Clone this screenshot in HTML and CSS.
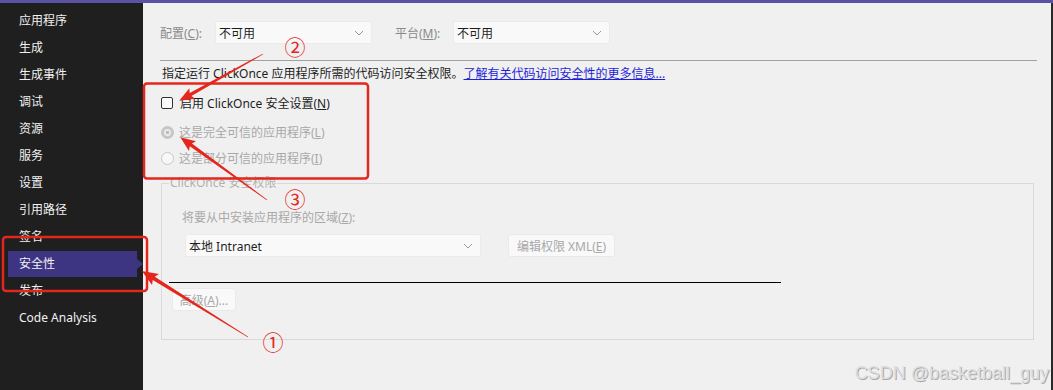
FILE: index.html
```html
<!DOCTYPE html>
<html lang="zh-CN">
<head>
    <meta charset="UTF-8">
    <meta name="viewport" content="width=device-width, initial-scale=1.0">
    <title>安全性 - 项目属性</title>
    <link rel="stylesheet" href="styles.css">
</head>

<body>
    <div class="window">
        <div class="title-strip"></div>
        <div class="main">
            <nav class="sidebar">
                <div class="nav-item">应用程序</div>
                <div class="nav-item">生成</div>
                <div class="nav-item">生成事件</div>
                <div class="nav-item">调试</div>
                <div class="nav-item">资源</div>
                <div class="nav-item">服务</div>
                <div class="nav-item">设置</div>
                <div class="nav-item">引用路径</div>
                <div class="nav-item">签名</div>
                <div class="nav-item active">安全性</div>
                <div class="nav-item">发布</div>
                <div class="nav-item">Code Analysis</div>
            </nav>

            <section class="content">
                <div class="config-row">
                    <span class="field-label">配置(<u>C</u>):</span>
                    <div class="select select-sm">
                        <span>不可用</span>
                        <svg class="chevron" viewBox="0 0 10 6"><polyline points="1,1 5,5 9,1"/></svg>
                    </div>
                    <span class="field-label platform">平台(<u>M</u>):</span>
                    <div class="select select-sm">
                        <span>不可用</span>
                        <svg class="chevron" viewBox="0 0 10 6"><polyline points="1,1 5,5 9,1"/></svg>
                    </div>
                </div>

                <div class="rule"></div>

                <p class="desc">指定运行 ClickOnce 应用程序所需的代码访问安全权限。<a href="#">了解有关代码访问安全性的更多信息...</a></p>

                <div class="option enable">
                    <span class="checkbox"></span>
                    <span>启用 ClickOnce 安全设置(<u>N</u>)</span>
                </div>
                <div class="option disabled first-radio">
                    <span class="radio checked"></span>
                    <span>这是完全可信的应用程序(<u>L</u>)</span>
                </div>
                <div class="option disabled second-radio">
                    <span class="radio"></span>
                    <span>这是部分可信的应用程序(<u>I</u>)</span>
                </div>

                <fieldset class="group">
                    <legend>ClickOnce 安全权限</legend>
                    <div class="group-body">
                        <div class="zone-label">将要从中安装应用程序的区域(<u>Z</u>):</div>
                        <div class="zone-row">
                            <div class="select select-lg">
                                <span>本地 Intranet</span>
                                <svg class="chevron" viewBox="0 0 10 6"><polyline points="1,1 5,5 9,1"/></svg>
                            </div>
                            <button class="btn edit-btn">编辑权限 XML(<u>E</u>)</button>
                        </div>
                        <div class="black-rule"></div>
                        <button class="btn adv-btn">高级(<u>A</u>)...</button>
                    </div>
                </fieldset>
            </section>
            <div class="edge"></div>
        </div>

        <!-- red annotations drawn over the screenshot -->
        <svg class="marks" viewBox="0 0 1053 390">
            <rect x="144" y="83.5" width="224" height="95" rx="3"/>
            <rect x="3" y="237" width="144" height="54" rx="3"/>

            <polygon class="arrow" transform="translate(263 54) rotate(150.8)"
                points="0,-0.4 83,-1.8 81,-6 96,0 81,6 83,1.8 0,0.4"/>
            <polygon class="arrow" transform="translate(267 200) rotate(-144.1)"
                points="0,-0.4 94,-1.8 92,-6 107,0 92,6 94,1.8 0,0.4"/>
            <polygon class="arrow" transform="translate(248 337) rotate(-148.1)"
                points="0,-0.4 111,-1.9 109,-6.5 125,0 109,6.5 111,1.9 0,0.4"/>

            <text x="295" y="55">②</text>
            <text x="295" y="207">③</text>
            <text x="273" y="350">①</text>
        </svg>

        <div class="watermark">CSDN @basketball_guy</div>
    </div>
</body>
</html>
```

FILE: styles.css
```css
/* Reset */
* {
    margin: 0;
    padding: 0;
    box-sizing: border-box;
}

body {
    font-family: "Noto Sans", "Noto Sans CJK SC", sans-serif;
    font-size: 12px;
    background-color: #f0f0f0;
    color: #1e1e1e;
}

u {
    text-decoration: underline;
    text-underline-offset: 1px;
}

.window {
    position: relative;
    width: 1053px;
    height: 390px;
    overflow: hidden;
    background-color: #f0f0f0;
}

.title-strip {
    height: 3px;
    background-color: #5a52a2;
}

.main {
    display: flex;
    height: 387px;
}

/* Sidebar */
.sidebar {
    width: 143px;
    flex-shrink: 0;
    background-color: #1f1f1f;
    padding-top: 4px;
}

.nav-item {
    height: 27px;
    line-height: 27px;
    padding-left: 19px;
    color: #f1f1f1;
    white-space: nowrap;
}

.nav-item.active {
    position: relative;
    height: 26px;
    line-height: 26px;
    margin: 1px 6px 0 8px;
    padding-left: 11px;
    background-color: #3e3582;
}

.nav-item.active::after {
    content: "";
    position: absolute;
    right: -6px;
    top: 8px;
    border-top: 5px solid transparent;
    border-bottom: 5px solid transparent;
    border-left: 6px solid #3e3582;
}

/* Content */
.content {
    flex: 1;
    padding: 18px 14px 0 17px;
}

.edge {
    width: 2px;
    background-color: #2a2a2a;
}

.config-row {
    display: flex;
    align-items: center;
    height: 23px;
}

.field-label {
    width: 55px;
    color: #8a8a8a;
}

.field-label.platform {
    width: 58px;
    margin-left: 23px;
}

.select {
    display: flex;
    align-items: center;
    justify-content: space-between;
    height: 23px;
    padding: 0 7px 0 3px;
    background-color: #f9f9f9;
    border: 1px solid #ebebeb;
    border-radius: 2px;
    color: #1e1e1e;
}

.select-sm {
    width: 157px;
}

.select-lg {
    width: 296px;
}

.chevron {
    width: 10px;
    height: 6px;
    fill: none;
    stroke: #9a9a9a;
    stroke-width: 1;
}

.rule {
    height: 1px;
    margin-top: 16px;
    background-color: #a0a0a0;
}

.desc {
    margin-top: 5px;
    padding-left: 2px;
    line-height: 16px;
    white-space: nowrap;
}

.desc a {
    color: #1f1fd6;
    text-decoration: underline;
}

/* Check + radio rows */
.option {
    display: flex;
    align-items: center;
    height: 18px;
    margin-left: 1px;
    white-space: nowrap;
}

.option.enable {
    margin-top: 12px;
    gap: 7px;
}

.option.disabled {
    color: #a8a8a8;
    gap: 5px;
}

.option.first-radio {
    margin-top: 11px;
}

.option.second-radio {
    margin-top: 8px;
}

.checkbox {
    width: 12px;
    height: 12px;
    border: 1px solid #333;
    border-radius: 2px;
    background-color: #fbfbfb;
}

.radio {
    width: 13px;
    height: 13px;
    border: 1px solid #c9c9c9;
    border-radius: 50%;
    background-color: #f7f7f7;
}

.radio.checked {
    border: 3px solid #c6c6c6;
    background: radial-gradient(circle, #bcbcbc 0 1.5px, #ececec 2px);
}

/* Group box */
.group {
    margin: 8px 3px 0 1px;
    border: 1px solid #d9d9d9;
    min-width: 0;
}

.group legend {
    margin-left: 7px;
    padding: 0 1px;
    line-height: 16px;
    color: #b0b0b0;
}

.group-body {
    padding: 19px 0 28px 7px;
}

.zone-label {
    margin-left: 13px;
    line-height: 16px;
    color: #a8a8a8;
}

.zone-row {
    display: flex;
    align-items: center;
    margin: 8px 0 0 16px;
}

.btn {
    height: 23px;
    padding: 0 6px;
    font-family: inherit;
    font-size: 12px;
    color: #a8a8a8;
    background-color: #f9f9f9;
    border: 1px solid #e9e9e9;
    border-radius: 3px;
}

.edit-btn {
    width: 107px;
    margin-left: 27px;
}

.adv-btn {
    display: block;
    width: 64px;
    margin: 5px 0 0 3px;
}

.black-rule {
    width: 612px;
    height: 1px;
    margin-top: 25px;
    background-color: #000;
}

/* Annotations */
.marks {
    position: absolute;
    top: 0;
    left: 0;
    width: 1053px;
    height: 390px;
    pointer-events: none;
}

.marks rect {
    fill: none;
    stroke: #e4261d;
    stroke-width: 2.5;
}

.marks .arrow {
    fill: #e4261d;
}

.marks text {
    fill: #e4261d;
    font-family: "Noto Sans CJK SC", "DejaVu Sans", sans-serif;
    font-size: 21px;
    text-anchor: middle;
}

.watermark {
    position: absolute;
    right: 4px;
    bottom: 6px;
    font-family: "Liberation Sans", Arial, sans-serif;
    font-size: 18px;
    color: #dedede;
    text-shadow: 1px 1px 0 #a9a9a9;
    white-space: nowrap;
}
```
